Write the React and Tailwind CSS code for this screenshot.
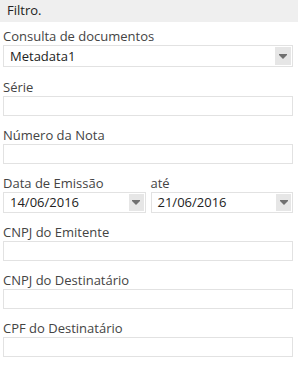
import React from 'react';

function Caret({ w = 15 }) {
  return (
    <span className="flex h-full items-center justify-center bg-[#e6e6e6]" style={{ width: w }}>
      <svg width="8" height="5" viewBox="0 0 8 5">
        <path d="M0 0h8v1L4 5 0 1z" fill="#707070" />
      </svg>
    </span>
  );
}

function Field({ label, className = '' }) {
  return (
    <div className={className}>
      <div className="h-[17px] text-[13px] leading-[17px] text-[#444]">{label}</div>
      <div className="h-[20px] border border-[#e2e2e2] bg-white" />
    </div>
  );
}

function DateField({ label, value }) {
  return (
    <div className="flex-1">
      <div className="h-[17px] text-[13px] leading-[17px] text-[#444]">{label}</div>
      <div className="flex h-[21px] items-stretch border border-[#e2e2e2] bg-white p-px">
        <span className="flex-1 pl-[5px] text-[13px] leading-[17px] text-[#222]">{value}</span>
        <Caret />
      </div>
    </div>
  );
}

export default function App() {
  return (
    <div className="h-[375px] w-[301px] bg-white" style={{ fontFamily: '"Open Sans", "Noto Sans", sans-serif' }}>
      <div className="flex h-[22px] w-[298px] items-center bg-[#efefef] pl-[7px] text-[13px] text-[#222]">
        Filtro.
      </div>
      <div className="w-[293px] pl-[3px] pt-[6px]">
        <div>
          <div className="h-[17px] text-[13px] leading-[17px] text-[#444]">Consulta de documentos</div>
          <div className="flex h-[22px] items-stretch border border-[#e2e2e2] bg-white p-px">
            <span className="flex-1 pl-[5px] text-[13px] leading-[18px] text-[#222]">Metadata1</span>
            <Caret w={16} />
          </div>
        </div>
        <Field label="Série" className="mt-[12px]" />
        <Field label="Número da Nota" className="mt-[11px]" />
        <div className="mt-[11px] flex gap-[5px]">
          <DateField label="Data de Emissão" value="14/06/2016" />
          <DateField label="até" value="21/06/2016" />
        </div>
        <Field label="CNPJ do Emitente" className="mt-[11px]" />
        <Field label="CNPJ do Destinatário" className="mt-[11px]" />
        <Field label="CPF do Destinatário" className="mt-[11px]" />
      </div>
    </div>
  );
}
